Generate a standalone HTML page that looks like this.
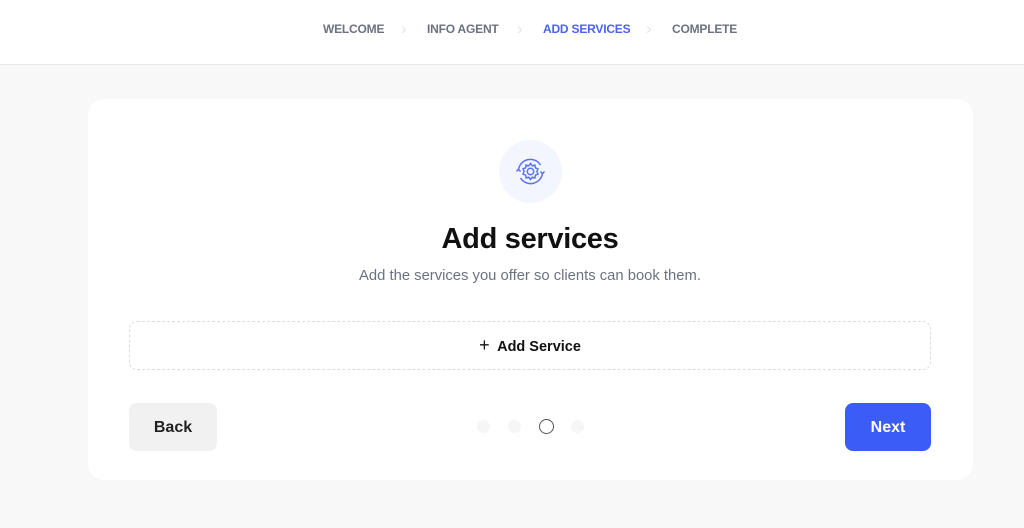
<!DOCTYPE html>
<html><head><style>
*{box-sizing:border-box;margin:0;padding:0}
body{width:1024px;height:528px;background:#f8f8f8;font-family:"Liberation Sans",Roboto,sans-serif;position:relative;overflow:hidden}
.top{position:absolute;left:0;top:0;width:1024px;height:65px;background:#fff;border-bottom:1px solid #e8e8e8}
.st{position:absolute;top:22px;font-size:12px;font-weight:bold;color:#6b7280;letter-spacing:-0.2px}
.chev{position:absolute;top:19px;color:#e6e6e6;font-size:17px}
.card{position:absolute;left:88px;top:99px;width:885px;height:381px;background:#fff;border-radius:16px}
.ic{position:absolute;left:499px;top:140px;width:63px;height:63px;border-radius:50%;background:#f3f5ff}
h1{position:absolute;left:0;width:1024px;top:223px;text-align:center;font-size:29px;font-weight:bold;color:#111;letter-spacing:-0.3px;padding-left:36px}
.sub{position:absolute;left:0;width:1024px;top:268px;text-align:center;font-size:14.8px;color:#6b7280;padding-left:36px}
.add{position:absolute;left:129px;top:321px;width:802px;height:49px;border:1px dashed #dcdcdc;border-radius:8px;text-align:center;line-height:47px;font-size:14.5px;font-weight:bold;color:#111}
.back{position:absolute;left:129px;top:403px;width:88px;height:48px;border-radius:8px;background:#f1f1f1;text-align:center;line-height:50px;font-size:16px;font-weight:bold;color:#222}
.next{position:absolute;left:845px;top:403px;width:86px;height:48px;border-radius:8px;background:#3b5cf6;text-align:center;line-height:50px;font-size:16px;font-weight:bold;color:#fff}
.dot{position:absolute;top:420px;width:13px;height:13px;border-radius:50%;background:#f6f6f6}
</style></head><body>
<div class="top">
<span class="st" style="left:323px">WELCOME</span><span class="chev" style="left:401px">›</span>
<span class="st" style="left:427px">INFO AGENT</span><span class="chev" style="left:517px">›</span>
<span class="st" style="left:543px;color:#4b63f0">ADD SERVICES</span><span class="chev" style="left:646px">›</span>
<span class="st" style="left:672px">COMPLETE</span>
</div>
<div class="card"></div>
<div class="ic"><svg width="63" height="63" viewBox="0 0 63 63" fill="none" stroke="#5b73f0" stroke-width="1.5">
<circle cx="31.5" cy="31.5" r="3.2"/>
<path d="M31.5 23.5l1.7 2.3 2.7-.7.5 2.7 2.6 1.1-1.1 2.6 1.1 2.6-2.6 1.1-.5 2.7-2.7-.7-1.7 2.3-1.7-2.3-2.7.7-.5-2.7-2.6-1.1 1.1-2.6-1.1-2.6 2.6-1.1.5-2.7 2.7.7z"/>
<path d="M19.5 29.5a12 12 0 0 1 22-4.5M43.5 33.5a12 12 0 0 1-22 4.5"/>
<path d="M41.5 31.5l2 2.2 2-2.2M17.5 31.5l2-2.2 2 2.2"/></svg></div>
<h1>Add services</h1>
<div class="sub">Add the services you offer so clients can book them.</div>
<div class="add"><span style="font-weight:normal;font-size:18px">+</span>&nbsp; Add Service</div>
<div class="back">Back</div>
<div class="dot" style="left:477px"></div>
<div class="dot" style="left:508px"></div>
<div class="dot" style="left:539px;background:#fff;border:1.5px solid #555;width:15px;height:15px;top:419px"></div>
<div class="dot" style="left:571px"></div>
<div class="next">Next</div>
</body></html>
